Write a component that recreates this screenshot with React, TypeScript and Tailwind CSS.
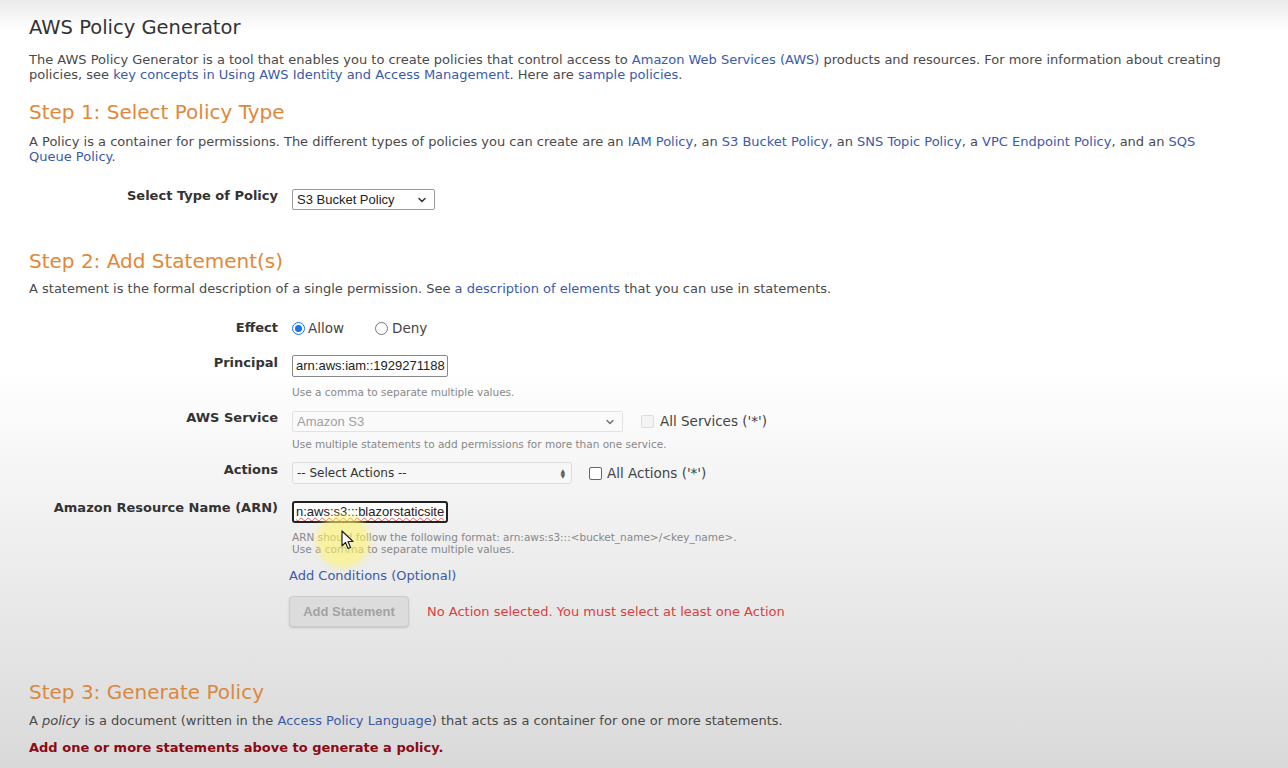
import { ChevronDown } from 'lucide-react'

const body = "font-['DejaVu_Sans',Verdana,sans-serif]"
const arial = "font-['Liberation_Sans',Arial,sans-serif]"

function Row({ label, children, className = '' }: { label: string; children: React.ReactNode; className?: string }) {
  return (
    <div className={`grid grid-cols-[278px_1fr] gap-x-[14px] ${className}`}>
      <div className="text-right text-[13px] font-bold leading-[20px] text-[#333]">{label}</div>
      <div>{children}</div>
    </div>
  )
}

export default function App() {
  return (
    <div
      className={`relative min-h-[768px] w-[1288px] overflow-hidden bg-[linear-gradient(to_bottom,#ebebeb_0px,#ffffff_30px,#ffffff_370px,#d9d9d9_768px)] pl-[29px] pr-[52px] pt-[16px] text-[#4a4a4a] ${body}`}
    >
      <h1 className="text-[19.5px] leading-[24px] text-[#333]">AWS Policy Generator</h1>

      <p className="mt-[12px] text-[13px] leading-[15px]">
        The AWS Policy Generator is a tool that enables you to create policies that control access to{' '}
        <a className="text-[#3b5aa8]">Amazon Web Services (AWS)</a> products and resources. For more information about creating
        policies, see <a className="text-[#3b5aa8]">key concepts in Using AWS Identity and Access Management</a>. Here are{' '}
        <a className="text-[#3b5aa8]">sample policies</a>.
      </p>

      {/* Step 1 */}
      <h2 className="mt-[18px] text-[20px] leading-[24px] text-[#e0883a]">Step 1: Select Policy Type</h2>
      <p className="mt-[10px] text-[13px] leading-[15px]">
        A Policy is a container for permissions. The different types of policies you can create are an{' '}
        <a className="text-[#3b5aa8]">IAM Policy</a>, an <a className="text-[#3b5aa8]">S3 Bucket Policy</a>, an{' '}
        <a className="text-[#3b5aa8]">SNS Topic Policy</a>, a <a className="text-[#3b5aa8]">VPC Endpoint Policy</a>, and an{' '}
        <a className="text-[#3b5aa8]">SQS Queue Policy</a>.
      </p>

      <div className="ml-[-29px] mt-[22px]">
        <Row label="Select Type of Policy">
          <div
            className={`mt-[3px] flex h-[21px] w-[143px] items-center justify-between rounded-[2px] border border-[#9a9a9a] bg-white pl-[4px] pr-[6px] text-[13px] text-[#222] ${arial}`}
          >
            <span>S3 Bucket Policy</span>
            <ChevronDown size={12} strokeWidth={3} className="text-[#333]" />
          </div>
        </Row>
      </div>

      {/* Step 2 */}
      <h2 className="mt-[39px] text-[20px] leading-[24px] text-[#e0883a]">Step 2: Add Statement(s)</h2>
      <p className="mt-[8px] text-[13px] leading-[15px]">
        A statement is the formal description of a single permission. See{' '}
        <a className="text-[#3b5aa8]">a description of elements</a> that you can use in statements.
      </p>

      <div className="ml-[-29px] mt-[22px] flex flex-col">
        <Row label="Effect">
          <div className="flex items-center text-[13.5px] leading-[20px] text-[#444]">
            <span className="flex h-[13px] w-[13px] items-center justify-center rounded-full border-[1.5px] border-[#1a73e8] bg-white">
              <span className="h-[7px] w-[7px] rounded-full bg-[#1a73e8]" />
            </span>
            <span className="ml-[3px]">Allow</span>
            <span className="ml-[31px] h-[13px] w-[13px] rounded-full border border-[#777] bg-white" />
            <span className="ml-[4px]">Deny</span>
          </div>
        </Row>

        <Row label="Principal" className="mt-[15px]">
          <div
            className={`mt-[2px] flex h-[22px] w-[156px] items-center overflow-hidden whitespace-nowrap rounded-[2px] border border-[#888] bg-white px-[3px] text-[13px] text-[#222] ${arial}`}
          >
            arn:aws:iam::1929271188
          </div>
          <div className="mt-[9px] text-[10.5px] leading-[12px] text-[#888]">Use a comma to separate multiple values.</div>
        </Row>

        <Row label="AWS Service" className="mt-[10px]">
          <div className="mt-[3px] flex items-center">
            <div
              className={`flex h-[21px] w-[331px] items-center justify-between rounded-[2px] border border-[#e2e2e2] bg-[#fafafa] pl-[4px] pr-[6px] text-[13px] text-[#a0a0a0] ${arial}`}
            >
              <span>Amazon S3</span>
              <ChevronDown size={12} strokeWidth={3} className="text-[#777]" />
            </div>
            <span className="ml-[18px] h-[13px] w-[13px] rounded-[2px] border border-[#ddd] bg-[#f4f4f4]" />
            <span className="ml-[6px] text-[13.5px] text-[#444]">All Services ('*')</span>
          </div>
          <div className="mt-[6px] text-[10.5px] leading-[12px] text-[#888]">
            Use multiple statements to add permissions for more than one service.
          </div>
        </Row>

        <Row label="Actions" className="mt-[10px]">
          <div className="mt-[2px] flex items-center">
            <div className="flex h-[22px] w-[280px] items-center justify-between rounded-[3px] border border-[#ddd] bg-[#f7f7f7] pl-[4px] pr-[6px] text-[12px] text-[#333]">
              <span>-- Select Actions --</span>
              <span className="flex flex-col items-center leading-[5px] text-[#555]">
                <span className="text-[6px]">▲</span>
                <span className="text-[6px]">▼</span>
              </span>
            </div>
            <span className="ml-[17px] h-[13px] w-[13px] rounded-[2px] border border-[#666] bg-white" />
            <span className="ml-[5px] text-[13.5px] text-[#444]">All Actions ('*')</span>
          </div>
        </Row>

        <Row label="Amazon Resource Name (ARN)" className="mt-[14px]">
          <div
            className={`mt-[3px] flex h-[22px] w-[156px] items-center overflow-hidden rounded-[3px] border-2 border-[#222] bg-white px-[2px] text-[13px] leading-[16px] text-[#222] ${arial}`}
          >
            <span className="whitespace-nowrap underline decoration-[#e05a5a] decoration-wavy decoration-[1px] underline-offset-[1px]">
              n:aws:s3:::blazorstaticsite
            </span>
          </div>
          <div className="mt-[8px] text-[10.5px] leading-[12px] text-[#888]">
            ARN should follow the following format: arn:aws:s3:::&lt;bucket_name&gt;/&lt;key_name&gt;.
            <br />
            Use a comma to separate multiple values.
          </div>
        </Row>

        <div className="ml-[289px] mt-[8px]">
          <a className="text-[13px] leading-[16px] text-[#3b5aa8]">Add Conditions (Optional)</a>
          <div className="mt-[9px] flex items-center">
            <button
              className={`h-[31px] w-[120px] rounded-[4px] border border-[#ccc] bg-[#dcdcdc] text-[13px] font-bold text-[#a3a3a3] shadow-[0_1px_2px_rgba(0,0,0,0.15)] ${arial}`}
            >
              Add Statement
            </button>
            <span className="ml-[18px] text-[13px] text-[#d9403f]">No Action selected. You must select at least one Action</span>
          </div>
        </div>
      </div>

      {/* Step 3 */}
      <h2 className="mt-[53px] text-[20px] leading-[24px] text-[#d9893f]">Step 3: Generate Policy</h2>
      <p className="mt-[9px] text-[13px] leading-[15px]">
        A <em>policy</em> is a document (written in the <a className="text-[#3b5aa8]">Access Policy Language</a>) that acts as a
        container for one or more statements.
      </p>
      <p className="mt-[12px] text-[13px] font-bold leading-[15px] text-[#8b0a14]">
        Add one or more statements above to generate a policy.
      </p>

      {/* cursor highlight */}
      <div className="pointer-events-none absolute left-[316px] top-[514px] h-[54px] w-[54px] rounded-full bg-[#fff36a]/60 blur-[3px]" />
      <svg className="absolute left-[341px] top-[530px]" width="14" height="20" viewBox="0 0 14 20">
        <path d="M1 1 L1 16 L4.5 12.5 L7 18.5 L9.5 17.5 L7 11.5 L12 11.5 Z" fill="#fff" stroke="#222" strokeWidth="1.2" strokeLinejoin="round" />
      </svg>
    </div>
  )
}
